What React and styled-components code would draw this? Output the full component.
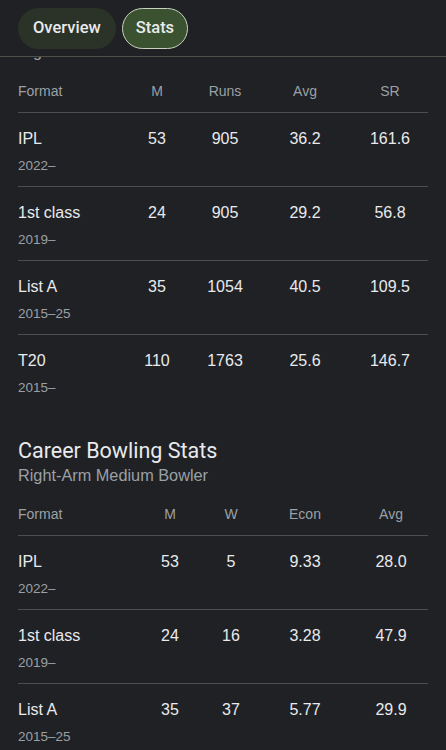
import React from 'react';
import styled, { createGlobalStyle } from 'styled-components';

const GlobalStyle = createGlobalStyle`
  html, body {
    margin: 0;
    padding: 0;
    background: #202124;
  }
  body {
    font-family: "Liberation Sans", Arial, sans-serif;
    color: #e8eaed;
    -webkit-font-smoothing: antialiased;
  }
`;

const batting = [
  { format: 'IPL', years: '2022–', values: ['53', '905', '36.2', '161.6'] },
  { format: '1st class', years: '2019–', values: ['24', '905', '29.2', '56.8'] },
  { format: 'List A', years: '2015–25', values: ['35', '1054', '40.5', '109.5'] },
  { format: 'T20', years: '2015–', values: ['110', '1763', '25.6', '146.7'] },
];

const bowling = [
  { format: 'IPL', years: '2022–', values: ['53', '5', '9.33', '28.0'] },
  { format: '1st class', years: '2019–', values: ['24', '16', '3.28', '47.9'] },
  { format: 'List A', years: '2015–25', values: ['35', '37', '5.77', '29.9'] },
];

const Page = styled.div`
  width: 446px;
  height: 750px;
  overflow: hidden;
  background: #202124;
`;

const TabBar = styled.div`
  display: flex;
  gap: 6px;
  padding: 8px 18px 7px;
  border-bottom: 1px solid #4a5047;
  background: #202124;
`;

const Tab = styled.button`
  height: 41px;
  padding: 0 ${({ active }) => (active ? '13px' : '15px')};
  border-radius: 21px;
  border: ${({ active }) => (active ? '1.5px solid #c9d1c0' : 'none')};
  background: ${({ active }) => (active ? '#3a5230' : '#2b3227')};
  color: #e8eaed;
  font-family: Roboto, "Liberation Sans", sans-serif;
  font-size: 16.5px;
  font-weight: 500;
  line-height: 20px;
  padding-bottom: 1px;
`;

const Content = styled.div`
  padding: 0 18px;
`;

const Clipped = styled.div`
  height: 6px;
  overflow: hidden;
  color: #9aa0a6;
  font-size: 16px;
  line-height: 20px;

  span {
    display: block;
    margin-top: -15px;
  }
`;

const Section = styled.section`
  margin-top: ${({ spaced }) => (spaced ? '28px' : '0')};
`;

const Title = styled.h2`
  margin: 0;
  font-family: Roboto, "Liberation Sans", sans-serif;
  font-size: 21.5px;
  font-weight: 400;
  line-height: 28px;
  padding-top: 1px;
  color: #e8eaed;
`;

const Subtitle = styled.div`
  font-size: 16.3px;
  line-height: 20px;
  color: #9aa0a6;
`;

const Grid = styled.div`
  display: grid;
  grid-template-columns: ${({ cols }) => cols};
`;

const HeadRow = styled(Grid)`
  padding: ${({ first }) => (first ? '18px 0 11px' : '19px 0 11px')};
  border-bottom: 1px solid #4b4e53;
  font-size: 14px;
  line-height: 20px;
  color: #9aa0a6;
`;

const Row = styled(Grid)`
  padding: 15px 0 11px;
  border-bottom: ${({ last }) => (last ? 'none' : '1px solid #4b4e53')};
`;

const Cell = styled.div`
  text-align: ${({ left }) => (left ? 'left' : 'center')};
  font-size: 16px;
  line-height: 22px;
  white-space: nowrap;
`;

const HeadCell = styled.div`
  text-align: ${({ left }) => (left ? 'left' : 'center')};
`;

const Years = styled.div`
  margin-top: 7px;
  font-size: 13.5px;
  line-height: 18px;
  color: #9aa0a6;
`;

const StatsTable = ({ cols, headers, rows, first }) => (
  <div>
    <HeadRow cols={cols} first={first}>
      {headers.map((h, i) => (
        <HeadCell key={h} left={i === 0}>{h}</HeadCell>
      ))}
    </HeadRow>
    {rows.map((r, i) => (
      <Row key={r.format} cols={cols} last={i === rows.length - 1}>
        <Cell left>
          {r.format}
          <Years>{r.years}</Years>
        </Cell>
        {r.values.map((v, j) => (
          <Cell key={j}>{v}</Cell>
        ))}
      </Row>
    ))}
  </div>
);

const App = () => (
  <Page>
    <GlobalStyle />
    <TabBar>
      <Tab type="button">Overview</Tab>
      <Tab type="button" active>Stats</Tab>
    </TabBar>
    <Content>
      <Clipped><span>Right-Handed Batter</span></Clipped>
      <Section>
        <StatsTable
          first
          cols="104px 70px 66px 94px 76px"
          headers={['Format', 'M', 'Runs', 'Avg', 'SR']}
          rows={batting}
        />
      </Section>
      <Section spaced>
        <Title>Career Bowling Stats</Title>
        <Subtitle>Right-Arm Medium Bowler</Subtitle>
        <StatsTable
          cols="116px 72px 50px 98px 74px"
          headers={['Format', 'M', 'W', 'Econ', 'Avg']}
          rows={bowling}
        />
      </Section>
    </Content>
  </Page>
);

export default App;
